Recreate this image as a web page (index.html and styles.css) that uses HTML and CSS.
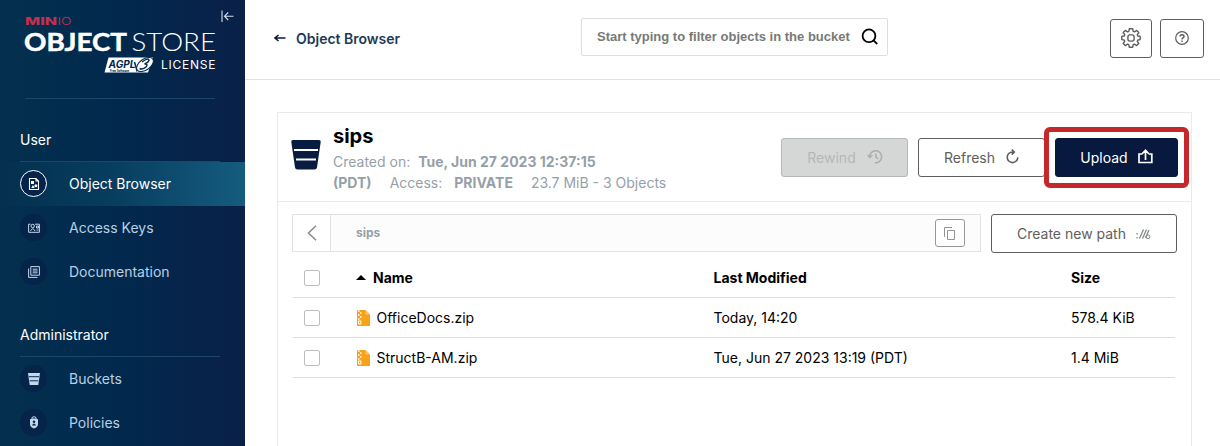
FILE: index.html
```html
<!DOCTYPE html>
<html lang="en">
<head>
<meta charset="utf-8">
<title>Object Browser</title>
<link rel="stylesheet" href="styles.css">
</head>
<body>
<div class="app">
  <aside class="sidebar">
    <div class="brand">
      <svg class="logo" width="192" height="60" viewBox="0 0 192 60">
        <text class="logo-minio" x="0" y="9.500" textLength="32" lengthAdjust="spacingAndGlyphs">MIN</text>
        <text class="logo-io" x="32.500" y="9.500" textLength="14" lengthAdjust="spacingAndGlyphs">IO</text>
        <text class="logo-object" x="-1" y="35.800" textLength="103" lengthAdjust="spacingAndGlyphs">OBJECT</text>
        <text class="logo-store" x="106.500" y="35.800" textLength="84.500" lengthAdjust="spacingAndGlyphs">STORE</text>
        <path d="M83.500 42.500H128L123 57.500H79.500Z" fill="#fff"/>
        <text class="logo-agpl" x="83.500" y="53" textLength="27" lengthAdjust="spacingAndGlyphs">AGPL</text>
        <text class="logo-tiny" x="85" y="56.500" textLength="19" lengthAdjust="spacingAndGlyphs">Free Software</text>
        <path d="M109.500 47L112 55.500L119 46" fill="none" stroke="#02284c" stroke-width="1.500"/>
        <ellipse cx="120" cy="49.500" rx="9.500" ry="5.500" transform="rotate(-35 120 49.500)" fill="#fff" stroke="#02284c"/>
        <path d="M117 47Q124 42 124 45.500Q123 48 119.500 49Q123 48.800 121.500 51.500Q118 55 114.500 53.500" fill="none" stroke="#02284c" stroke-width="1.500"/>
        <text class="logo-license" x="136" y="53.700" textLength="54.500">LICENSE</text>
      </svg>
      <svg class="collapse" width="13" height="13" viewBox="0 0 13 13" fill="none" stroke="#d5e0e9" stroke-width="1.100"><path d="M1 .5V12M12.500 6.200H3.500M7.200 2.500L3.500 6.200L7.200 10"/></svg>
    </div>
    <nav class="menu">
      <h2 class="menu-title">User</h2>
      <a class="item active"><span class="disc"><svg width="12" height="14" viewBox="0 0 12 14"><path d="M1.500 1.500H8L10.500 4V12.500H1.500ZM8 1.500V4H10.500" fill="none" stroke="#fff" stroke-width="1.100"/><path d="M3 4H6V7H3ZM5 8L6.700 11H3.200Z" fill="#fff"/><circle cx="7.900" cy="8.700" r="1.500" fill="#fff"/></svg></span>Object Browser</a>
      <a class="item"><span class="disc"><svg width="12" height="10" viewBox="0 0 12 10" fill="none" stroke="#c1d8ed"><path d="M2.500 1.200H.6V9.300H11.400V1.200H7"/><circle cx="4.700" cy="3" r="1.700"/><path d="M2.500 8Q4.700 3.500 7 8M8.500 3H10.500V5H8.500ZM8.500 7H10.500"/></svg></span>Access Keys</a>
      <a class="item"><span class="disc"><svg width="12" height="12" viewBox="0 0 12 12" fill="none" stroke="#c1d8ed"><path d="M2.800.6H11.400V9.200H2.800ZM.6 2.500V11.400H9.500M4.700 3.200H9.500M4.700 5H9.500M4.700 6.800H9.500"/></svg></span>Documentation</a>
      <h2 class="menu-title admin">Administrator</h2>
      <a class="item"><span class="disc"><svg width="12" height="12" viewBox="0 0 12 12"><path d="M0 0H12L10.300 12H1.700Z" fill="#c1d8ed"/><path d="M1 3.700H11M1.700 7.800H10.300" stroke="#0b2850" stroke-width="1"/></svg></span>Buckets</a>
      <a class="item"><span class="disc"><svg width="10" height="13" viewBox="0 0 10 13"><path d="M3 3V1.500Q5-.2 7 1.500V3" fill="none" stroke="#c1d8ed"/><path d="M1 3.200Q5 2 9 3.200V8Q9 11.300 5 12.500Q1 11.300 1 8Z" fill="#c1d8ed"/><circle cx="5" cy="5.700" r="1.300" fill="#0b2850"/><path d="M2.900 9.500Q5 5.500 7.100 9.500Z" fill="#0b2850"/></svg></span>Policies</a>
    </nav>
  </aside>
  <main class="main">
    <header class="topbar">
      <a class="back"><svg width="12" height="8" viewBox="0 0 12 8" fill="none" stroke="#07193e" stroke-width="1.500"><path d="M11.500 4H1M4.500 1L1 4L4.500 7"/></svg><span>Object Browser</span></a>
      <div class="search"><span>Start typing to filter objects in the bucket</span><svg width="18" height="18" viewBox="0 0 18 18" fill="none" stroke="#000" stroke-width="1.800"><circle cx="8" cy="7.800" r="6.400"/><path d="M12.500 12.300L16.200 16"/></svg></div>
      <div class="tools">
        <div class="tool gear"><svg width="20" height="20" viewBox="0 0 20 20" fill="none" stroke="#5e5e5e" stroke-width="1.400" stroke-linejoin="round"><path d="M8.300.8H11.700L12.200 3.400L13.500 3.900L15.700 2.400L17.800 4.500L16.300 6.700L16.800 8L19.200 8.400V11.600L16.800 12L16.300 13.300L17.800 15.500L15.700 17.600L13.500 16.100L12.200 16.600L11.700 19.200H8.300L7.800 16.600L6.500 16.100L4.300 17.600L2.200 15.500L3.700 13.300L3.200 12L.8 11.600V8.400L3.200 8L3.700 6.700L2.200 4.500L4.300 2.400L6.500 3.900L7.800 3.400Z"/><rect x="6.900" y="6.900" width="6.200" height="6.200" rx="2"/></svg></div>
        <div class="tool help"><svg width="14" height="14" viewBox="0 0 14 14" fill="none" stroke="#5e5e5e" stroke-width="1.200"><circle cx="7" cy="7" r="6.300"/><path d="M5 5.600Q5 3.800 7 3.800T9 5.500Q9 6.500 7.800 7Q7 7.400 7 8.600M7 9.500V10.900" stroke-width="1.400"/></svg></div>
      </div>
    </header>
    <section class="panel">
      <div class="bucket-head">
        <svg class="bucket" width="30" height="30" viewBox="0 0 30 30"><path d="M2 0H28Q30 0 29.700 2L26 27.500Q25.600 29.500 23.500 29.500H6.500Q4.400 29.500 4 27.500L.3 2Q0 0 2 0Z" fill="#081c42"/><path d="M3 10H27M5 19.500H25" stroke="#fff" stroke-width="2"/></svg>
        <div class="info">
          <h1>sips</h1>
          <div class="meta"><span>Created on: <b class="date">Tue, Jun 27 2023 12:37:15</b></span><div class="meta-row"><b>(PDT)</b><span class="access">Access:</span><b class="private">PRIVATE</b><span class="usage">23.7 MiB - 3 Objects</span></div></div>
        </div>
        <div class="actions">
          <button class="btn rewind">Rewind<svg width="16" height="14" viewBox="0 0 16 14" fill="none" stroke="#aaaead" stroke-width="1.500"><path d="M2.700 7A6 6 0 1 1 8 12.700M.5 5L2.700 7.500L5.400 5.200M8.800 3.500V7L11.300 9"/></svg></button>
          <button class="btn refresh">Refresh<svg width="13" height="15" viewBox="0 0 13 15" fill="none" stroke="#5e5e5e" stroke-width="1.600"><path d="M8.200 3H6.500A5.300 5.300 0 1 0 11.800 8.300M5.700.6L8.300 3L5.700 5.600"/></svg></button>
          <div class="callout"><button class="btn upload">Upload<svg width="15" height="15" viewBox="0 0 15 15" fill="none" stroke="#fff" stroke-width="1.700"><path d="M4.500 5H1V13.500H13.800V5H10.500M7.500 11V1.500M4.400 4.500L7.500 1.300L10.600 4.500"/></svg></button></div>
        </div>
      </div>
      <div class="pathbar">
        <div class="crumbs"><div class="prev"><svg width="10" height="16" viewBox="0 0 10 16" fill="none" stroke="#878b8c" stroke-width="1.500"><path d="M9 .7L1.500 8L9 15.300"/></svg></div><b>sips</b><div class="copy"><svg width="12" height="13" viewBox="0 0 12 13" fill="none" stroke="#919494"><path d="M3.500 3.500H10.500V12.500H3.500ZM.5 10V.5H8"/></svg></div></div>
        <button class="btn create">Create new path<svg width="15" height="12" viewBox="0 0 15 12" fill="none" stroke="#858989" stroke-width="1.300"><path d="M1 5V6.500M1 9V10.500M3.500 10.500L7.500 1.500M6.500 10.500L10.500 1.500M9.500 10L13 2"/><circle cx="12" cy="8.800" r="1.900" stroke-width="1"/></svg></button>
      </div>
      <div class="table">
        <div class="row head"><span class="check"></span><div class="name"><i class="sort"></i>Name</div><div>Last Modified</div><div>Size</div></div>
        <div class="row"><span class="check"></span><div class="name"><svg class="zip" width="13" height="16" viewBox="0 0 13 16"><path d="M0 0H8.500L13 4.500V16H0Z" fill="#f5a31a"/><path d="M8.500 0V4.500H13" fill="#ffc35b"/><path d="M1 1H2.500M3 3H4.500M1 5H2.500M3 7H4.500M1 9H2.500" stroke="#fff" stroke-width="1.300"/><path d="M1.500 11H4V14H1.500Z" fill="none" stroke="#fff"/></svg>OfficeDocs.zip</div><div>Today, 14:20</div><div>578.4 KiB</div></div>
        <div class="row"><span class="check"></span><div class="name"><svg class="zip" width="13" height="16" viewBox="0 0 13 16"><path d="M0 0H8.500L13 4.500V16H0Z" fill="#f5a31a"/><path d="M8.500 0V4.500H13" fill="#ffc35b"/><path d="M1 1H2.500M3 3H4.500M1 5H2.500M3 7H4.500M1 9H2.500" stroke="#fff" stroke-width="1.300"/><path d="M1.500 11H4V14H1.500Z" fill="none" stroke="#fff"/></svg>StructB-AM.zip</div><div>Tue, Jun 27 2023 13:19 (PDT)</div><div>1.4 MiB</div></div>
      </div>
    </section>
  </main>
</div>
</body>
</html>
```
FILE: styles.css
```css
* { box-sizing: border-box; }
body { margin: 0; font-family: Inter, sans-serif; font-size: 14px; color: #000; background: #fff; }
svg { display: block; flex: none; }
.app { display: flex; height: 446px; }
.sidebar { width: 245px; flex: none; overflow: hidden; background: linear-gradient(90deg, #04304e 0%, #01294d 45%, #0a2048 100%); }
.brand { display: flex; height: 99px; margin: 0 30px 0 25px; padding-top: 15px; border-bottom: 1px solid #1d4766; }
.logo { overflow: visible; }
.logo text { font-family: Inter, sans-serif; fill: #fff; }
.logo .logo-minio { font-size: 10px; font-weight: 800; fill: #c72e4c; }
.logo .logo-io { font-size: 10px; font-weight: 300; fill: #c72e4c; }
.logo .logo-object { font-family: Lato, sans-serif; font-size: 25.500px; font-weight: 700; stroke: #fff; stroke-width: .5px; }
.logo .logo-store { font-family: Lato, sans-serif; font-size: 25.500px; font-weight: 300; }
.logo .logo-agpl { font-size: 10px; font-weight: 700; font-style: italic; fill: #02284c; }
.logo .logo-tiny { font-size: 3.500px; font-weight: 700; fill: #02284c; }
.logo .logo-license { font-size: 12px; }
.collapse { margin: -5px 0 0 4px; }
.menu-title { height: 44px; margin: 19px 25px 0 20px; font-size: 14px; line-height: 44px; font-weight: 400; color: #fff; border-bottom: 1px solid #1d4766; }
.item { display: flex; align-items: center; gap: 22px; height: 44px; padding: 0 0 1px 20px; color: #b8d0e6; }
.item.active { color: #fff; background: linear-gradient(90deg, #04304e 0%, #073d5f 45%, #155c7f 100%); }
.disc { display: flex; width: 27px; height: 27px; align-items: center; justify-content: center; border-radius: 50%; background: #062349; }
.active .disc { border: 1px solid #fff; }
.main { flex: 1; min-width: 0; }
.topbar { display: flex; height: 80px; border-bottom: 1px solid #e2e2e2; }
.back { display: flex; gap: 10px; width: 336px; height: 18px; margin-top: 29px; padding-left: 29px; align-items: center; font-weight: 600; color: #1d3a57; }
.search { display: flex; justify-content: space-between; align-items: center; width: 307px; height: 38px; margin-top: 18px; padding: 0 8px 2px 15px; border: 1px solid #dedede; border-radius: 2px; font: bold 13px "Liberation Sans", sans-serif; color: #777a77; white-space: nowrap; }
.search svg { margin-top: 2px; }
.tools { display: flex; gap: 8px; margin: 19px 0 0 222px; }
.tool { display: flex; width: 42px; height: 39px; padding-bottom: 2px; align-items: center; justify-content: center; border: 1px solid #5e5e5e; border-radius: 3px; }
.tool.help { width: 44px; }
.panel { width: 915px; height: 334px; margin: 32px 0 0 32px; border: 1px solid #eaeaea; border-bottom: 0; }
.bucket-head { display: flex; height: 89px; border-bottom: 1px solid #eaeaea; }
.bucket { margin: 27px 12px 0 13px; }
.info { width: 448px; white-space: nowrap; }
h1 { margin: 11px 0 0; font-size: 20px; line-height: 25px; font-weight: 700; }
.meta { line-height: 21px; margin-top: 2px; color: #969fa8; }
.date { margin-left: 4px; }
.meta-row { display: flex; }
.access { margin-left: 18px; }
.private { margin-left: 12px; }
.usage { margin-left: 18px; }
.actions { display: flex; align-items: flex-start; padding-top: 25px; }
.btn { display: flex; align-items: center; justify-content: center; gap: 11px; height: 39px; padding: 0; font: 14px Inter, sans-serif; color: #5e5e5e; background: #fff; border: 1px solid #5e5e5e; border-radius: 3px; white-space: nowrap; }
.btn svg { position: relative; top: -1px; }
.rewind { width: 127px; padding-left: 1px; color: #b4b7b6; background: #d5d7d7; border-color: #b5b8b8; }
.refresh { width: 127px; margin-left: 10px; }
.callout { margin: -11px 0 0 -1px; padding: 6px; position: relative; border: 5px solid #c6272b; border-radius: 6px; background: #fff; }
.upload { width: 123px; gap: 10px; color: #fff; background: #07193e; border-color: #07193e; }
.pathbar { display: flex; gap: 10px; margin: 12px 14px 0; }
.crumbs { display: flex; align-items: center; width: 689px; height: 38px; border: 1px solid #e2e2e2; background: #fcfcfc; color: #969fa8; font-size: 12px; }
.prev { display: flex; width: 38px; height: 36px; align-items: center; justify-content: center; background: #fff; border-right: 1px solid #e2e2e2; }
.crumbs b { margin: -2px 0 0 25px; }
.copy { display: flex; width: 30px; height: 28px; margin-left: auto; margin-right: 15px; align-items: center; justify-content: center; border: 1px solid #969999; border-radius: 3px; background: #fff; }
.create { width: 186px; gap: 10px; }
.create svg { top: 0; }
.table { margin: 5px 16px 0 15px; }
.row { display: grid; grid-template-columns: 64px 356.500px 357.500px 1fr; align-items: center; height: 40px; border-bottom: 1px solid #dedede; white-space: nowrap; }
.head { font-weight: 700; }
.check { width: 16px; height: 16px; margin-left: 11px; border: 1px solid #bdbdbd; border-radius: 2px; background: #fff; }
.name { display: flex; align-items: center; }
.sort { width: 0; height: 0; margin-right: 7px; margin-left: -1px; border: 5px solid transparent; border-top: 0; border-bottom-color: #000; }
.zip { margin-right: 6.500px; }
```
